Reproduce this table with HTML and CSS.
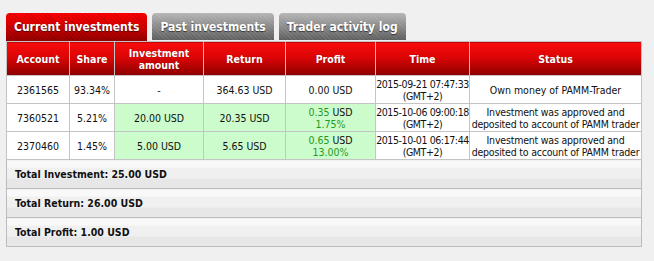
FILE: index.html
```html
<!DOCTYPE html>
<html>
<head>
<meta charset="utf-8">
<link rel="stylesheet" href="styles.css">
</head>
<body>
<div class="wrap">
  <div class="tabs">
    <div class="tab active">Current investments</div>
    <div class="tab">Past investments</div>
    <div class="tab">Trader activity log</div>
  </div>
  <table class="grid">
    <colgroup>
      <col class="c1"><col class="c2"><col class="c3"><col class="c4"><col class="c5"><col class="c6"><col class="c7">
    </colgroup>
    <thead>
      <tr>
        <th>Account</th>
        <th>Share</th>
        <th>Investment<br>amount</th>
        <th>Return</th>
        <th>Profit</th>
        <th>Time</th>
        <th>Status</th>
      </tr>
    </thead>
    <tbody>
      <tr>
        <td>2361565</td>
        <td>93.34%</td>
        <td>-</td>
        <td>364.63 USD</td>
        <td>0.00 USD</td>
        <td class="time">2015-09-21 07:47:33<br>(GMT+2)</td>
        <td>Own money of PAMM-Trader</td>
      </tr>
      <tr>
        <td>7360521</td>
        <td>5.21%</td>
        <td class="hl">20.00 USD</td>
        <td class="hl">20.35 USD</td>
        <td class="hl"><span class="pos">0.35</span> USD<br><span class="pos">1.75%</span></td>
        <td class="time">2015-10-06 09:00:18<br>(GMT+2)</td>
        <td class="status">Investment was approved and<br>deposited to account of PAMM trader</td>
      </tr>
      <tr>
        <td>2370460</td>
        <td>1.45%</td>
        <td class="hl">5.00 USD</td>
        <td class="hl">5.65 USD</td>
        <td class="hl"><span class="pos">0.65</span> USD<br><span class="pos">13.00%</span></td>
        <td class="time">2015-10-01 06:17:44<br>(GMT+2)</td>
        <td class="status">Investment was approved and<br>deposited to account of PAMM trader</td>
      </tr>
    </tbody>
    <tfoot>
      <tr><td colspan="7">Total Investment: 25.00 USD</td></tr>
      <tr><td colspan="7">Total Return: 26.00 USD</td></tr>
      <tr><td colspan="7">Total Profit: 1.00 USD</td></tr>
    </tfoot>
  </table>
</div>
</body>
</html>
```
FILE: styles.css
```css
html, body {
  margin: 0;
  padding: 0;
  background: #f0f0f0;
}
body {
  font-family: "DejaVu Sans Condensed", "DejaVu Sans", sans-serif;
  font-size: 10.5px;
  color: #111;
}
.wrap {
  padding: 13px 0 0 6px;
  width: 635px;
}
.tabs {
  display: flex;
  align-items: flex-start;
  gap: 5px;
  height: 28px;
}
.tab {
  height: 27px;
  box-sizing: border-box;
  padding: 0 8px;
  display: flex;
  align-items: center;
  justify-content: center;
  font-weight: bold;
  font-size: 12px;
  color: #fff;
  border-radius: 4px 4px 0 0;
  text-shadow: 0 1px 1px rgba(0,0,0,0.6);
  background:
    repeating-linear-gradient(45deg, rgba(255,255,255,0.08) 0 1px, rgba(0,0,0,0) 1px 3px),
    linear-gradient(#b5b5b5, #8a8a8a 50%, #5e5e5e);
}
.tab.active {
  height: 28px;
  background:
    repeating-linear-gradient(45deg, rgba(0,0,0,0.12) 0 1px, rgba(0,0,0,0) 1px 3px),
    linear-gradient(#ff0000, #d40000 50%, #950000);
}

.grid {
  border-collapse: collapse;
  table-layout: fixed;
  width: 635px;
  border: 1px solid #c4c4c4;
}
.c1 { width: 63px; }
.c2 { width: 45px; }
.c3 { width: 89px; }
.c4 { width: 82px; }
.c5 { width: 90px; }
.c6 { width: 94px; }
.c7 { width: 172px; }

.grid th {
  height: 33px;
  padding: 0;
  border: 1px solid #c4c4c4;
  color: #fff;
  font-weight: bold;
  font-size: 10.5px;
  line-height: 12px;
  text-shadow: 0 0 1px rgba(120,0,0,0.8);
  background: linear-gradient(#f80c0c, #dc0505 45%, #8c0000);
}
.grid tbody td {
  height: 27px;
  padding: 0;
  border: 1px solid #c4c4c4;
  text-align: center;
  vertical-align: middle;
  line-height: 12px;
  background: #fff;
  white-space: nowrap;
}
.grid td.hl { background: #ccfccc; }
.pos { color: #1e9b1e; }
.time { letter-spacing: -0.4px; }
.status { letter-spacing: -0.2px; }

.grid tfoot td {
  height: 28px;
  padding: 0 0 0 8px;
  border: 1px solid #bcbcbc;
  font-weight: bold;
  font-size: 10.5px;
  color: #111;
  background: linear-gradient(#f9f9f9 0 7px, #f0f0f0 7px 18px, #e7e7e7 18px);
}
```
